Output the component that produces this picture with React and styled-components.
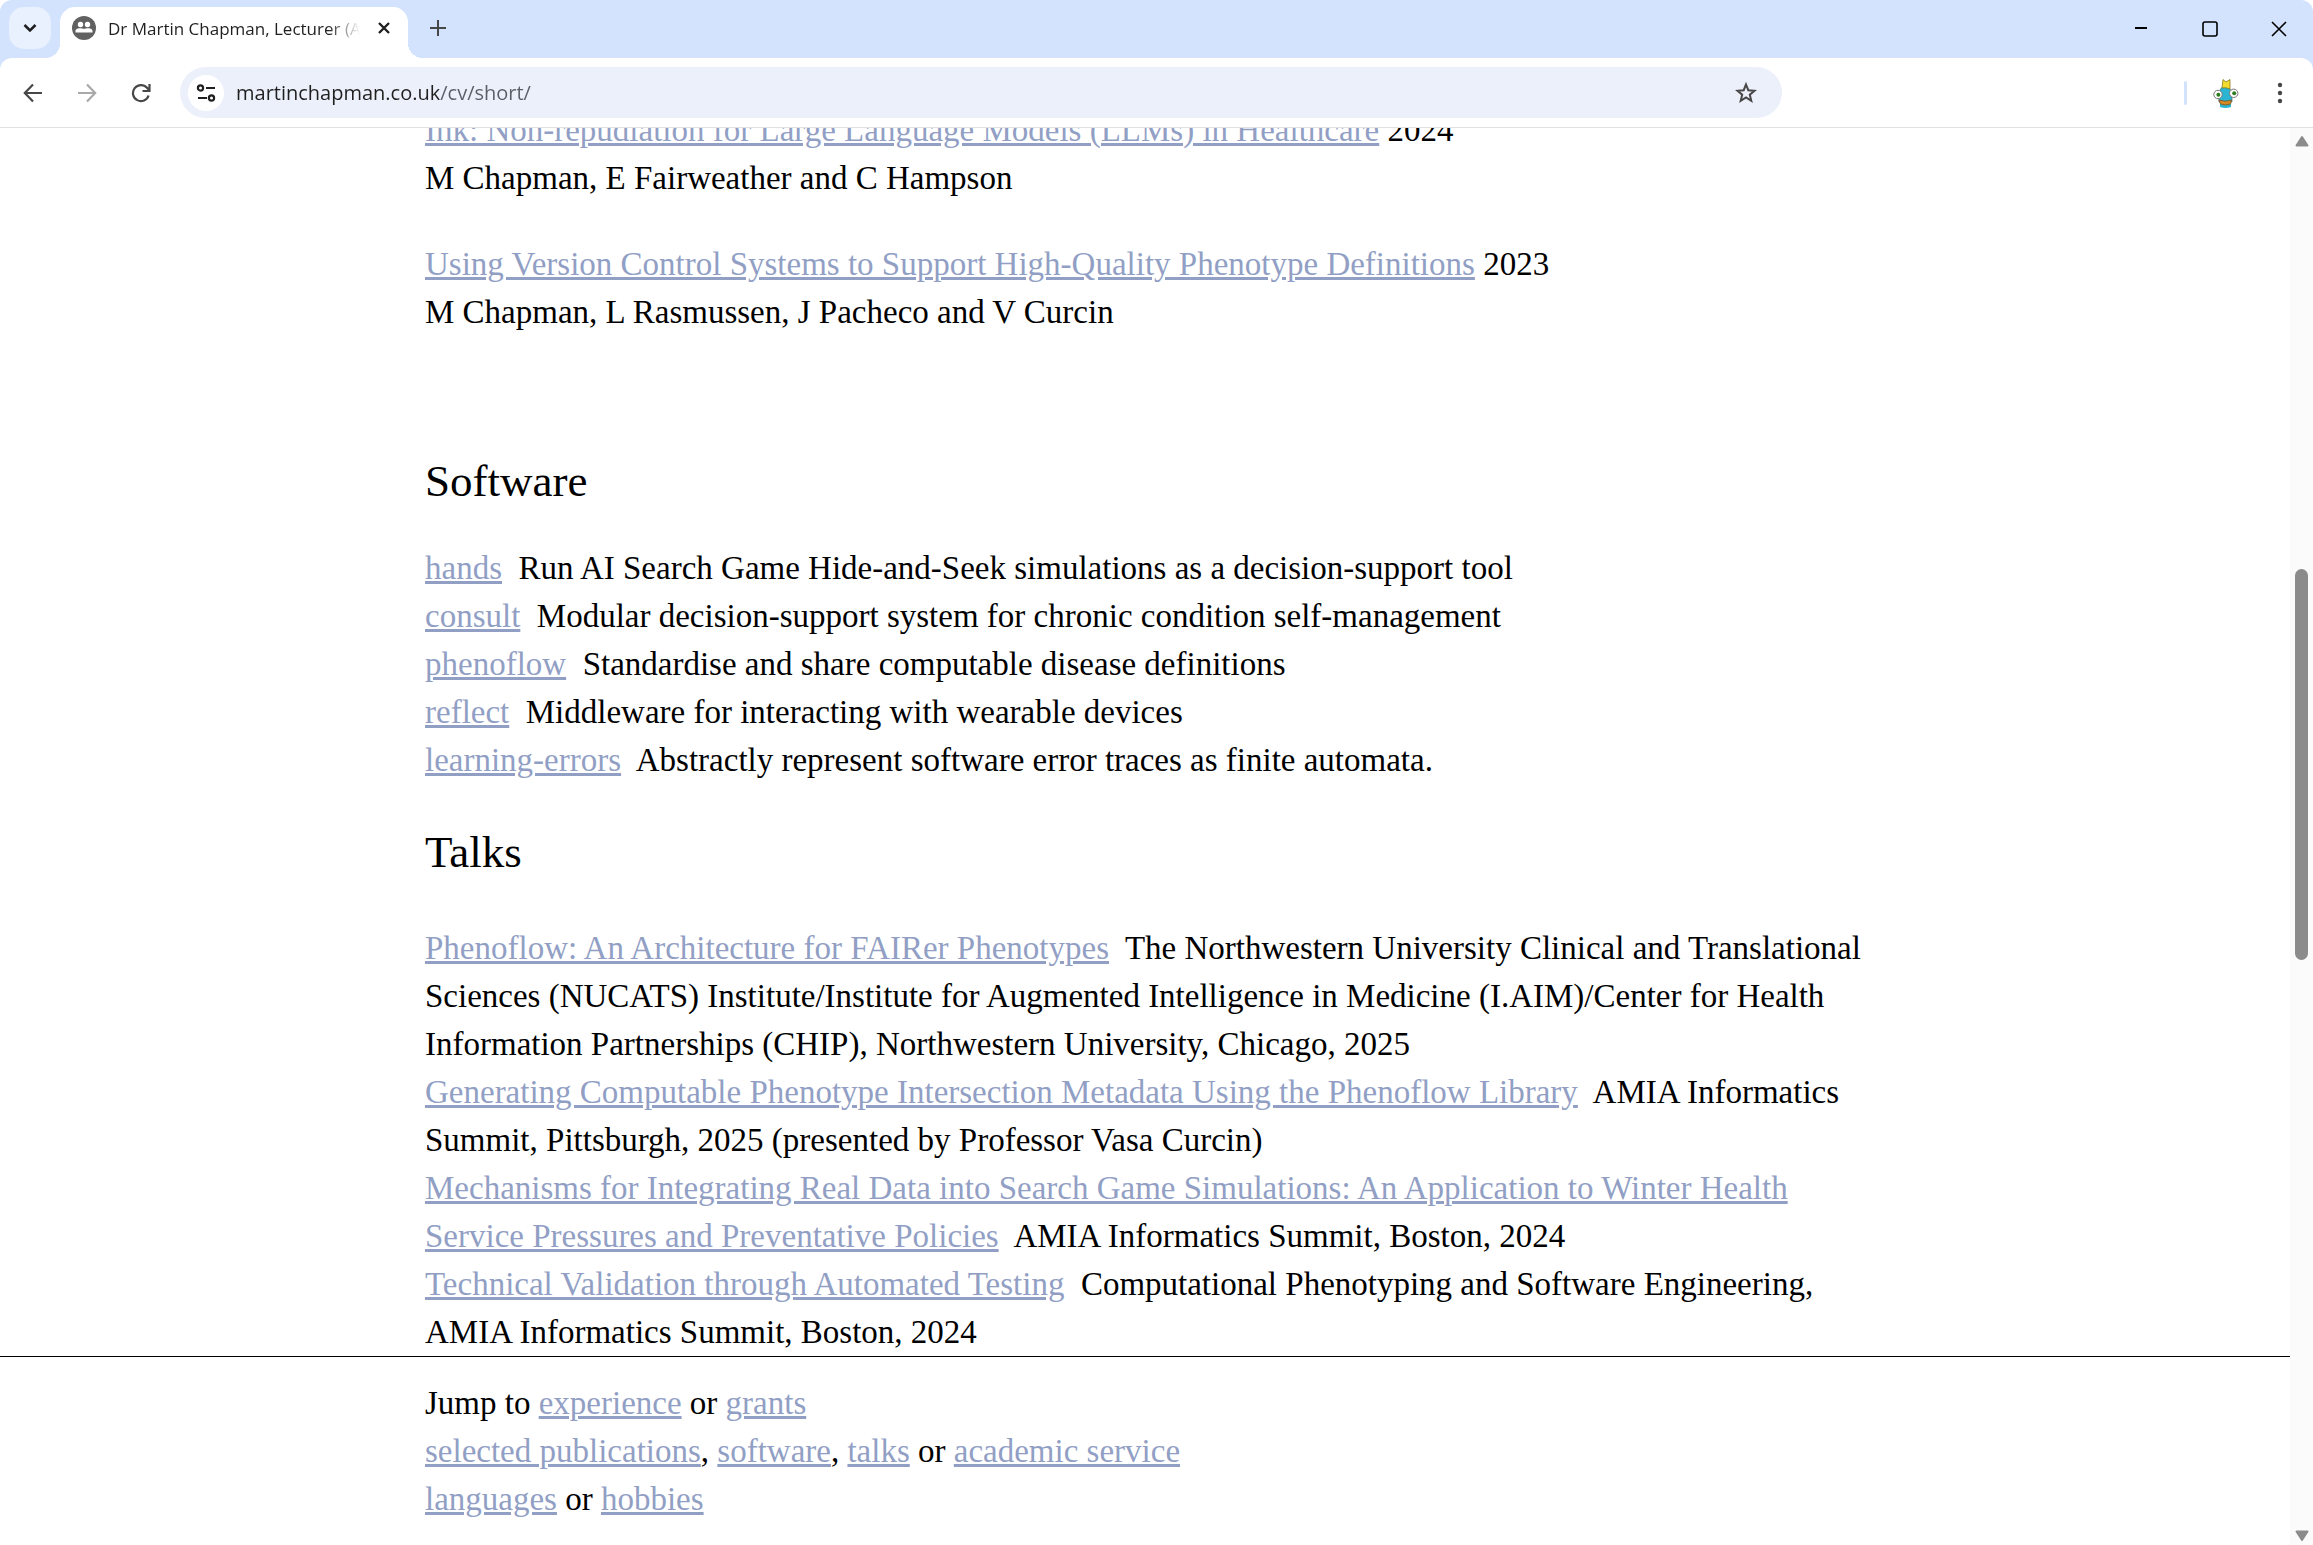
import React, { useState } from "react";
import styled, { createGlobalStyle } from "styled-components";

const publications = [
  {
    title:
      "Ink: Non-repudiation for Large Language Models (LLMs) in Healthcare",
    year: 2024,
    authors: "M Chapman, E Fairweather and C Hampson",
  },
  {
    title:
      "Using Version Control Systems to Support High-Quality Phenotype Definitions",
    year: 2023,
    authors: "M Chapman, L Rasmussen, J Pacheco and V Curcin",
  },
];

const software = [
  {
    name: "hands",
    text: "Run AI Search Game Hide-and-Seek simulations as a decision-support tool",
  },
  {
    name: "consult",
    text: "Modular decision-support system for chronic condition self-management",
  },
  {
    name: "phenoflow",
    text: "Standardise and share computable disease definitions",
  },
  {
    name: "reflect",
    text: "Middleware for interacting with wearable devices",
  },
  {
    name: "learning-errors",
    text: "Abstractly represent software error traces as finite automata.",
  },
];

const talks = [
  {
    name: "Phenoflow: An Architecture for FAIRer Phenotypes",
    text: "The Northwestern University Clinical and Translational Sciences (NUCATS) Institute/Institute for Augmented Intelligence in Medicine (I.AIM)/Center for Health Information Partnerships (CHIP), Northwestern University, Chicago, 2025",
  },
  {
    name: "Generating Computable Phenotype Intersection Metadata Using the Phenoflow Library",
    text: "AMIA Informatics Summit, Pittsburgh, 2025 (presented by Professor Vasa Curcin)",
  },
  {
    name: "Mechanisms for Integrating Real Data into Search Game Simulations: An Application to Winter Health Service Pressures and Preventative Policies",
    text: "AMIA Informatics Summit, Boston, 2024",
  },
  {
    name: "Technical Validation through Automated Testing",
    text: "Computational Phenotyping and Software Engineering, AMIA Informatics Summit, Boston, 2024",
  },
];

const Entries = ({ items }) => (
  <List>
    {items.map((item) => (
      <li key={item.name}>
        <Link href="#">{item.name}</Link>&nbsp; {item.text}
      </li>
    ))}
  </List>
);

const TabStrip = () => (
  <Strip>
    <SearchTabs aria-label="Search tabs">
      <svg width="14" height="10" viewBox="0 0 14 10">
        <path
          d="M1.5 2L7 7.5 12.5 2"
          fill="none"
          stroke="#1f1f1f"
          strokeWidth="2.5"
        />
      </svg>
    </SearchTabs>
    <Tab>
      <svg width="24" height="24" viewBox="0 0 24 24">
        <circle cx="12" cy="12" r="12" fill="#616161" />
        <g fill="#fff">
          <circle cx="8.5" cy="8.5" r="2.7" />
          <circle cx="15.5" cy="8.5" r="2.7" />
          <path d="M3.5 16.5v-1.7c0-2 3-2.6 5-2.6 1.3 0 2.5.2 3.5.7 1-.5 2.2-.7 3.500-.7 2 0 5 .6 5 2.600v1.700z" />
        </g>
      </svg>
      <TabTitle>Dr Martin Chapman, Lecturer (Assistant Professor)</TabTitle>
      <IconButton aria-label="Close tab" $size={24}>
        <svg width="12" height="12" viewBox="0 0 12 12">
          <path
            d="M1 1l10 10M11 1L1 11"
            stroke="#1f1f1f"
            strokeWidth="2.4"
          />
        </svg>
      </IconButton>
    </Tab>
    <IconButton aria-label="New tab" $size={42}>
      <svg width="16" height="16" viewBox="0 0 16 16">
        <path d="M8 0v16M0 8h16" stroke="#474747" strokeWidth="2" />
      </svg>
    </IconButton>
    <WindowControls>
      <WindowButton aria-label="Minimise">
        <svg width="16" height="16" viewBox="0 0 16 16">
          <path d="M2 7h12" stroke="#000" strokeWidth="2" />
        </svg>
      </WindowButton>
      <WindowButton aria-label="Maximise">
        <svg width="16" height="16" viewBox="0 0 16 16">
          <rect
            x="1"
            y="1"
            width="14"
            height="14"
            rx="2"
            fill="none"
            stroke="#000"
            strokeWidth="1.6"
          />
        </svg>
      </WindowButton>
      <WindowButton aria-label="Close">
        <svg width="16" height="16" viewBox="0 0 16 16">
          <path
            d="M1 1l14 14M15 1L1 15"
            stroke="#000"
            strokeWidth="1.6"
          />
        </svg>
      </WindowButton>
    </WindowControls>
  </Strip>
);

const Toolbar = () => {
  const [url, setUrl] = useState("martinchapman.co.uk/cv/short/");

  return (
    <Bar>
      <Nav>
        <IconButton aria-label="Back" $size={42}>
          <svg width="20" height="20" viewBox="0 0 20 20">
            <path
              d="M10 1.5L1.8 10l8.2 8.500M2 10h17"
              fill="none"
              stroke="#474747"
              strokeWidth="2.2"
            />
          </svg>
        </IconButton>
        <IconButton aria-label="Forward" $size={42}>
          <svg width="20" height="20" viewBox="0 0 20 20">
            <path
              d="M10 1.5l8.2 8.500L10 18.500M18 10H1"
              fill="none"
              stroke="#a9a9a9"
              strokeWidth="2.2"
            />
          </svg>
        </IconButton>
        <IconButton aria-label="Reload" $size={42}>
          <svg width="20" height="20" viewBox="0 0 20 20">
            <path
              d="M17.6 12.5A8 8 0 1 1 16 4.8l2 2.200M18.500 1v7h-7"
              fill="none"
              stroke="#474747"
              strokeWidth="2.2"
            />
          </svg>
        </IconButton>
      </Nav>
      <Omnibox>
        <SiteInfo aria-label="View site information">
          <svg width="20" height="18" viewBox="0 0 20 18">
            <g fill="none" stroke="#1f1f1f" strokeWidth="2.2">
              <circle cx="4.5" cy="4" r="2.6" />
              <circle cx="15.5" cy="14" r="2.6" />
              <path d="M10 4h9M2 14h9" />
            </g>
          </svg>
        </SiteInfo>
        <UrlInput
          aria-label="Address and search bar"
          spellCheck="false"
          value={url}
          onChange={(e) => setUrl(e.target.value)}
        />
        <IconButton aria-label="Bookmark this tab" $size={36}>
          <svg width="24" height="24" viewBox="0 0 24 24">
            <path
              d="M12 3.5l2.3 5.700 6.200.5-4.700 4 1.500 6.100-5.300-3.300-5.300 3.300 1.500-6.100-4.700-4 6.200-.5z"
              fill="none"
              stroke="#474747"
              strokeWidth="2"
            />
          </svg>
        </IconButton>
      </Omnibox>
      <Extras>
        <Separator />
        <IconButton aria-label="Profile" $size={42}>
          <svg width="28" height="30" viewBox="0 0 28 30">
            <path
              d="M7 24q-2-15 6-15.500t7 15.500z"
              fill="#2bb5d3"
              stroke="#3b6a70"
              strokeWidth=".6"
            />
            <path d="M8 26h11v3q-5.500 2-11 0z" fill="#2bb5d3" />
            <path
              d="M10 10l1-8.500 3 2.500 4-2.500v9.500q-4-2-8-1z"
              fill="#f4dc2c"
              stroke="#8a7a1a"
              strokeWidth=".8"
            />
            <path
              d="M7 22q6.500 2.500 12.500 0l-1 4q-5 2-10 0z"
              fill="#d58a24"
              stroke="#805018"
              strokeWidth=".8"
            />
            <g fill="#fff" stroke="#777">
              <circle cx="6" cy="16.5" r="4.2" />
              <circle cx="21.7" cy="15.3" r="4.2" />
            </g>
            <g fill="#2c7d1e">
              <circle cx="6.4" cy="16.7" r="2" />
              <circle cx="22.2" cy="15.3" r="2" />
            </g>
          </svg>
        </IconButton>
        <IconButton aria-label="Menu" $size={42}>
          <svg width="6" height="22" viewBox="0 0 6 22">
            <g fill="#474747">
              <circle cx="3" cy="3" r="2.2" />
              <circle cx="3" cy="11" r="2.2" />
              <circle cx="3" cy="19" r="2.2" />
            </g>
          </svg>
        </IconButton>
      </Extras>
    </Bar>
  );
};

const App = () => {
  return (
    <Browser>
      <GlobalStyle />
      <TabStrip />
      <Toolbar />
      <Viewport>
        <Page>
          <Content>
            <Column>
              {publications.map((pub) => (
                <Publication key={pub.title}>
                  <Link href="#">{pub.title}</Link> {pub.year}
                  <br />
                  {pub.authors}
                </Publication>
              ))}
              <Section $top={115} $gap={33}>
                <Heading>Software</Heading>
                <Entries items={software} />
              </Section>
              <Section $top={38} $gap={42}>
                <Heading>Talks</Heading>
                <Entries items={talks} />
              </Section>
            </Column>
          </Content>
          <JumpBar>
            <Column>
              Jump to <Link href="#">experience</Link> or{" "}
              <Link href="#">grants</Link>
              <br />
              <Link href="#">selected publications</Link>,{" "}
              <Link href="#">software</Link>, <Link href="#">talks</Link> or{" "}
              <Link href="#">academic service</Link>
              <br />
              <Link href="#">languages</Link> or <Link href="#">hobbies</Link>
            </Column>
          </JumpBar>
        </Page>
        <Scrollbar>
          <svg width="16" height="12" viewBox="0 0 16 12">
            <path
              d="M8 2l5.500 8.500h-11z"
              fill="#8b8b8b"
              stroke="#8b8b8b"
              strokeWidth="2"
              strokeLinejoin="round"
            />
          </svg>
          <Track>
            <Thumb />
          </Track>
          <svg width="16" height="12" viewBox="0 0 16 12">
            <path
              d="M8 10L2.500 1.500h11z"
              fill="#8b8b8b"
              stroke="#8b8b8b"
              strokeWidth="2"
              strokeLinejoin="round"
            />
          </svg>
        </Scrollbar>
      </Viewport>
    </Browser>
  );
};

const GlobalStyle = createGlobalStyle`
  * {
    box-sizing: border-box;
  }
  body {
    margin: 0;
    background: #fff;
  }
  button, input {
    border: 0;
    padding: 0;
    background: none;
    font: inherit;
  }
  svg {
    display: block;
    flex-shrink: 0;
  }
`;

const Browser = styled.div`
  display: flex;
  flex-direction: column;
  height: 100vh;
  overflow: hidden;
  border-radius: 12px 12px 0 0;
  background: #d3e2fd;
  font-family: "Open Sans", "Noto Sans", sans-serif;
  color: #1f1f1f;
`;

const Strip = styled.header`
  display: flex;
  flex-shrink: 0;
  height: 58px;
  padding: 7px 0 0 9px;
`;

const IconButton = styled.button`
  display: flex;
  flex-shrink: 0;
  align-items: center;
  justify-content: center;
  width: ${({ $size }) => $size}px;
  height: ${({ $size }) => $size}px;
  border-radius: 50%;
`;

const SearchTabs = styled.button`
  display: flex;
  align-items: center;
  justify-content: center;
  width: 42px;
  height: 42px;
  border-radius: 15px;
  background: #e9f0fe;
`;

const Tab = styled.div`
  position: relative;
  display: flex;
  align-items: center;
  width: 348px;
  margin: 0 9px;
  padding: 0 12px 9px;
  border-radius: 15px 15px 0 0;
  background: #fff;

  &::before,
  &::after {
    content: "";
    position: absolute;
    bottom: 0;
    width: 15px;
    height: 15px;
  }
  &::before {
    right: 100%;
    background: radial-gradient(circle at 0 0, transparent 15px, #fff 15px);
  }
  &::after {
    left: 100%;
    background: radial-gradient(circle at 100% 0, transparent 15px, #fff 15px);
  }
`;

const TabTitle = styled.span`
  flex: 1;
  margin: 0 12px;
  overflow: hidden;
  white-space: nowrap;
  font-size: 17px;
  mask-image: linear-gradient(to left, transparent, #000 32px);
`;

const WindowControls = styled.div`
  display: flex;
  margin-left: auto;
`;

const WindowButton = styled.button`
  display: flex;
  align-items: center;
  justify-content: center;
  width: 69px;
  height: 44px;
`;

const Bar = styled.div`
  display: flex;
  flex-shrink: 0;
  align-items: center;
  height: 70px;
  padding: 0 12px;
  border-bottom: 1px solid #dfe1e5;
  border-radius: 12px 12px 0 0;
  background: #fff;
`;

const Nav = styled.nav`
  display: flex;
  gap: 12px;
`;

const Omnibox = styled.div`
  display: flex;
  flex: 0 1 1602px;
  align-items: center;
  height: 51px;
  margin-left: 18px;
  padding: 0 18px 0 8px;
  border-radius: 26px;
  background: #ecf0fa;
`;

const SiteInfo = styled.button`
  display: flex;
  flex-shrink: 0;
  align-items: center;
  justify-content: center;
  width: 36px;
  height: 36px;
  border-radius: 50%;
  background: #fff;
`;

/* the host is darker than the path that follows it */
const UrlInput = styled.input`
  flex: 1;
  min-width: 0;
  margin-left: 12px;
  background: linear-gradient(to right, #1f1f1f 203px, #5a5e66 203px);
  background-clip: text;
  color: transparent;
  font-size: 20px;
  outline: none;
`;

const Extras = styled.div`
  display: flex;
  align-items: center;
  gap: 12px;
  margin-left: auto;
`;

const Separator = styled.div`
  width: 3px;
  height: 24px;
  margin-right: 6px;
  border-radius: 2px;
  background: #d3e2fd;
`;

const Viewport = styled.div`
  display: flex;
  flex: 1;
  min-height: 0;
  background: #fff;
`;

const Page = styled.div`
  display: flex;
  flex: 1;
  flex-direction: column;
  min-width: 0;
  color: #000;
  font-family: "Liberation Serif", serif;
  font-size: 33px;
  line-height: 48px;
`;

const Content = styled.main`
  flex: 1;
  min-height: 0;
  overflow: hidden;
`;

const Column = styled.div`
  max-width: 1440px;
  margin: 0 auto;

  /* scrolled part way through the first line */
  ${Content} > & {
    margin-top: -22px;
  }
`;

const Publication = styled.p`
  margin: 0 0 38px;
`;

const Section = styled.section`
  display: flex;
  flex-direction: column;
  gap: ${({ $gap }) => $gap}px;
  margin-top: ${({ $top }) => $top}px;
`;

const Heading = styled.h2`
  margin: 0;
  font-size: 45px;
  font-weight: 400;
  line-height: 60px;
`;

const List = styled.ul`
  margin: 0;
  padding: 0;
  list-style: none;
`;

const Link = styled.a`
  color: #929fc5;
  text-decoration: underline;
  text-decoration-thickness: 3px;
  text-underline-offset: 2px;
`;

const JumpBar = styled.footer`
  flex-shrink: 0;
  padding: 22px 0;
  border-top: 1px solid #000;
`;

const Scrollbar = styled.div`
  display: flex;
  flex-shrink: 0;
  flex-direction: column;
  align-items: center;
  width: 23px;
  padding: 7px 0 3px;
  background: #fbfbfb;
`;

const Track = styled.div`
  display: grid;
  flex: 1;
  grid-template-rows: 412fr 391fr 560fr;
  width: 13px;
  padding: 10px 0;
`;

const Thumb = styled.div`
  grid-row: 2;
  border-radius: 7px;
  background: #8b8b8b;
`;

export default App;
